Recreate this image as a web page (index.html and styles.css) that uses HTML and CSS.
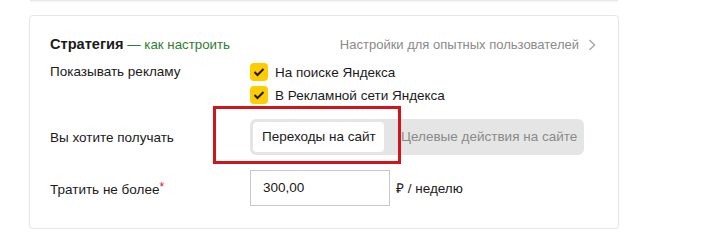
FILE: index.html
```html
<!DOCTYPE html>
<html lang="ru">
<head>
<meta charset="utf-8">
<link rel="stylesheet" href="styles.css">
</head>
<body>
<div class="prev-card"></div>
<div class="card">
  <div class="header">
    <div class="title"><span class="title-main">Стратегия</span> <a class="howto">— как настроить</a></div>
    <div class="advanced">Настройки для опытных пользователей
      <svg class="chev" width="8" height="12" viewBox="0 0 8 12"><path d="M1.5 1 L6.5 6 L1.5 11" fill="none" stroke="#a8a8a8" stroke-width="1.4"/></svg>
    </div>
  </div>
  <div class="row row-show">
    <div class="label">Показывать рекламу</div>
    <div class="checks">
      <div class="check"><span class="box"><svg width="12" height="10" viewBox="0 0 12 10"><path d="M1.5 5 L4.5 8 L10.5 2" fill="none" stroke="#1a1a1a" stroke-width="2"/></svg></span>На поиске Яндекса</div>
      <div class="check"><span class="box"><svg width="12" height="10" viewBox="0 0 12 10"><path d="M1.5 5 L4.5 8 L10.5 2" fill="none" stroke="#1a1a1a" stroke-width="2"/></svg></span>В Рекламной сети Яндекса</div>
    </div>
  </div>
  <div class="row row-goal">
    <div class="label">Вы хотите получать</div>
    <div class="segment">
      <div class="seg-item seg-active">Переходы на сайт</div>
      <div class="seg-item">Целевые действия на сайте</div>
      <div class="highlight"></div>
    </div>
  </div>
  <div class="row row-budget">
    <div class="label">Тратить не более<span class="req">*</span></div>
    <div class="input">300,00</div>
    <div class="unit">₽ / неделю</div>
  </div>
</div>
</body>
</html>
```
FILE: styles.css
```css
html, body {
  margin: 0;
  padding: 0;
  background: #fff;
}
body {
  font-family: "Liberation Sans", Arial, sans-serif;
  color: #1a1a1a;
  font-size: 13.5px;
  padding-left: 29px;
  width: 590px;
}
.prev-card {
  height: 1px;
  margin: 0 1px;
  background: #e8e8e8;
  box-shadow: 0 1px 2px rgba(0,0,0,0.06);
}
.card {
  margin-top: 14px;
  border: 1px solid #e6e6e6;
  border-radius: 4px;
  box-shadow: 0 1px 2px rgba(0,0,0,0.05);
  padding: 17px 22px 21px 20px;
  height: 174px;
  box-sizing: content-box;
}
.header {
  display: flex;
  justify-content: space-between;
  align-items: center;
  height: 22px;
}
.title-main {
  font-weight: bold;
  font-size: 14.6px;
}
.howto {
  color: #2f7d32;
  font-size: 13.3px;
}
.advanced {
  color: #8a8a8a;
  font-size: 13px;
  display: flex;
  align-items: center;
  gap: 9px;
}
.chev { margin-top: 1px; }
.row {
  display: flex;
}
.label {
  width: 200px;
  flex: none;
}
.row-show {
  margin-top: 8px;
}
.row-show .label {
  line-height: 18px;
}
.checks {
  display: flex;
  flex-direction: column;
  gap: 5px;
}
.check {
  display: flex;
  align-items: center;
  height: 18px;
}
.box {
  width: 18px;
  height: 18px;
  background: #fc0;
  border-radius: 4px;
  display: flex;
  align-items: center;
  justify-content: center;
  margin-right: 7px;
}
.row-goal {
  margin-top: 15px;
  align-items: center;
}
.segment {
  position: relative;
  display: flex;
  align-items: center;
  background: #e5e5e5;
  border-radius: 6px;
  height: 36px;
  padding: 3px;
  box-sizing: border-box;
  width: 334px;
}
.seg-item {
  height: 30px;
  line-height: 30px;
  padding: 0 9px 0 9px;
  color: #8a8a8a;
  border-radius: 4px;
  white-space: nowrap;
}
.seg-active {
  background: #fff;
  color: #1a1a1a;
  width: 131px;
  box-sizing: border-box;
  margin-right: 8px;
}
.highlight {
  position: absolute;
  left: -37px;
  top: -13px;
  width: 188px;
  height: 58px;
  border: 3px solid #d0151b;
  box-sizing: border-box;
  pointer-events: none;
}
.row-budget {
  margin-top: 15px;
  align-items: center;
}
.req {
  color: #e0161c;
  vertical-align: 3px;
  font-size: 12px;
}
.input {
  width: 140px;
  height: 36px;
  box-sizing: border-box;
  border: 1px solid #c8c8c8;
  padding-left: 12px;
  line-height: 34px;
}
.unit {
  margin-left: 6px;
}
```
